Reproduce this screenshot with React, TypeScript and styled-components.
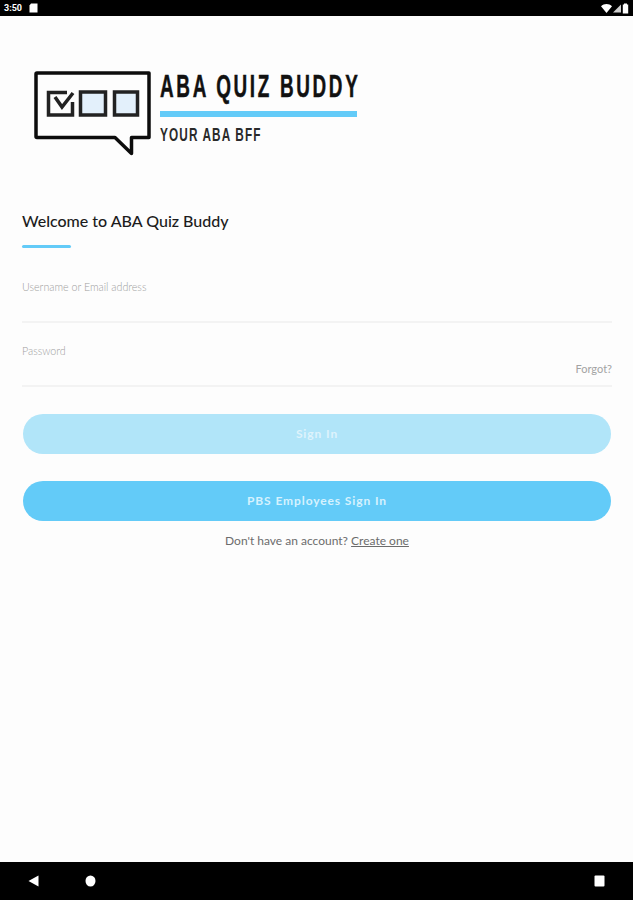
import React from 'react'
import styled, { createGlobalStyle } from 'styled-components'

const GlobalStyle = createGlobalStyle`
  html, body {
    margin: 0;
    padding: 0;
    background: #fdfdfd;
  }
  * {
    box-sizing: border-box;
  }
`

const Screen = styled.div`
  width: 633px;
  height: 900px;
  display: flex;
  flex-direction: column;
  background: #fdfdfd;
  font-family: Lato, 'Liberation Sans', sans-serif;
  overflow: hidden;
`

const StatusBar = styled.div`
  height: 16px;
  flex: none;
  background: #000;
  display: flex;
  align-items: center;
  justify-content: space-between;
  padding: 0 4px;
  color: #fff;
`

const StatusLeft = styled.div`
  display: flex;
  align-items: center;
  gap: 7px;
`

const Clock = styled.span`
  font-family: Roboto, sans-serif;
  font-size: 9px;
  font-weight: 700;
  line-height: 16px;
`

const StatusRight = styled.div`
  display: flex;
  align-items: center;
  gap: 1px;
`

const Content = styled.main`
  flex: 1;
  display: flex;
  flex-direction: column;
  padding: 0 21px 0 22px;
`

const LogoArt = styled.svg`
  display: block;
  width: 350px;
  height: 105px;
  margin: 44px 0 0 -2px;
  flex: none;
  overflow: visible;
`

const LogoTitle = styled.text`
  font-family: 'Liberation Sans', sans-serif;
  font-size: 30.5px;
  font-weight: 700;
  fill: #111;
  stroke: #111;
  stroke-width: 0.5px;
`

const LogoTagline = styled.text`
  font-family: 'Liberation Sans', sans-serif;
  font-size: 19px;
  font-weight: 700;
  fill: #2a2a2a;
`

const Heading = styled.h1`
  margin: 46px 0 0;
  font-size: 16px;
  line-height: 20px;
  font-weight: 500;
  color: #1c1c1c;
`

const Accent = styled.div`
  width: 49px;
  height: 3px;
  margin-top: 14px;
  border-radius: 2px;
  background: #63cbf8;
`

const Field = styled.div<{ $top: number; $height: number }>`
  margin-top: ${(p) => p.$top}px;
  height: ${(p) => p.$height}px;
  position: relative;
  border-bottom: 2px solid #f3f3f3;
`

const FieldLabel = styled.label`
  display: block;
  font-size: 10.7px;
  line-height: 14px;
  font-weight: 300;
  color: #a0a0a0;
`

const Forgot = styled.span`
  position: absolute;
  right: 0;
  bottom: 9px;
  font-size: 11px;
  line-height: 14px;
  color: #a3a3a3;
`

const PillButton = styled.button<{ $faded?: boolean; $top: number }>`
  display: block;
  width: 588px;
  height: 40px;
  margin: ${(p) => p.$top}px 0 0 1px;
  border: 0;
  border-radius: 20px;
  background: ${(p) => (p.$faded ? '#b1e5f9' : '#63cbf8')};
  color: ${(p) => (p.$faded ? '#def3fc' : '#d6f2fe')};
  font-family: inherit;
  font-size: 12px;
  font-weight: 700;
  letter-spacing: 0.9px;
  padding: 0 0 2px;
`

const SignUp = styled.p`
  margin: 12px 0 0;
  font-size: 12px;
  line-height: 16px;
  text-align: center;
  color: #6c6c6c;
`

const SignUpLink = styled.span`
  text-decoration: underline;
`

const NavBar = styled.div`
  height: 38px;
  flex: none;
  background: #000;
  display: flex;
  align-items: center;
  padding: 0 28px;
`

const NavGroup = styled.div`
  display: flex;
  align-items: center;
  gap: 46px;
  flex: 1;
`

export default function App() {
  return (
    <Screen>
      <GlobalStyle />
      <StatusBar>
        <StatusLeft>
          <Clock>3:50</Clock>
          <svg width="9" height="10" viewBox="0 0 9 10">
            <path d="M2 0.5h6.5v9h-8v-7z" fill="#fff" />
          </svg>
        </StatusLeft>
        <StatusRight>
          <svg width="11" height="9" viewBox="0 0 11 9">
            <path d="M0 2.2C3 -0.6 8 -0.6 11 2.2L5.5 9z" fill="#fff" />
          </svg>
          <svg width="8" height="9" viewBox="0 0 8 9">
            <path d="M8 0.5V8.5H0z" fill="#cfcfcf" />
          </svg>
          <svg width="7" height="11" viewBox="0 0 7 11">
            <path d="M2 0.5h3v1h1.2v9H0.8v-9H2z" fill="#fff" />
          </svg>
        </StatusRight>
      </StatusBar>
      <Content>
        <LogoArt viewBox="0 0 350 105">
          <path
            d="M17 13H129V77.5H111.5V93.5L95 77.5H17Q16 77.5 16 76.5V14Q16 13 17 13Z"
            fill="#fdfdfd"
            stroke="#0c0c0c"
            strokeWidth="3.5"
            strokeLinejoin="round"
          />
          <path d="M47 32.5H28.5V55H52.5V42" fill="none" stroke="#222" strokeWidth="3.5" />
          <path d="M35 37L42 47L53 33" fill="none" stroke="#222" strokeWidth="3.5" />
          <rect x="60.5" y="32" width="25" height="23" fill="#e3f0fb" stroke="#222" strokeWidth="3.5" />
          <rect x="94.5" y="32" width="23" height="23" fill="#e3f0fb" stroke="#222" strokeWidth="3.5" />
          <LogoTitle transform="translate(140 37) scale(0.62 1)" textLength="319" lengthAdjust="spacing">
            ABA QUIZ BUDDY
          </LogoTitle>
          <rect x="140" y="51" width="197" height="6" fill="#63cbf8" />
          <LogoTagline transform="translate(140 81) scale(0.62 1)" textLength="162" lengthAdjust="spacing">
            YOUR ABA BFF
          </LogoTagline>
        </LogoArt>
        <Heading>Welcome to ABA Quiz Buddy</Heading>
        <Accent />
        <Field $top={32} $height={43}>
          <FieldLabel>Username or Email address</FieldLabel>
        </Field>
        <Field $top={21} $height={43}>
          <FieldLabel>Password</FieldLabel>
          <Forgot>Forgot?</Forgot>
        </Field>
        <PillButton $faded $top={27}>
          Sign In
        </PillButton>
        <PillButton $top={27}>PBS Employees Sign In</PillButton>
        <SignUp>
          Don&apos;t have an account? <SignUpLink>Create one</SignUpLink>
        </SignUp>
      </Content>
      <NavBar>
        <NavGroup>
          <svg width="11" height="12" viewBox="0 0 11 12">
            <path d="M10.5 0.5V11.5L0.5 6z" fill="#fff" />
          </svg>
          <svg width="11" height="12" viewBox="0 0 11 12">
            <ellipse cx="5.5" cy="6" rx="5" ry="5.5" fill="#fff" />
          </svg>
        </NavGroup>
        <svg width="11" height="12" viewBox="0 0 11 12">
          <rect x="0.5" y="0.5" width="10" height="11" rx="1" fill="#fff" />
        </svg>
      </NavBar>
    </Screen>
  )
}
